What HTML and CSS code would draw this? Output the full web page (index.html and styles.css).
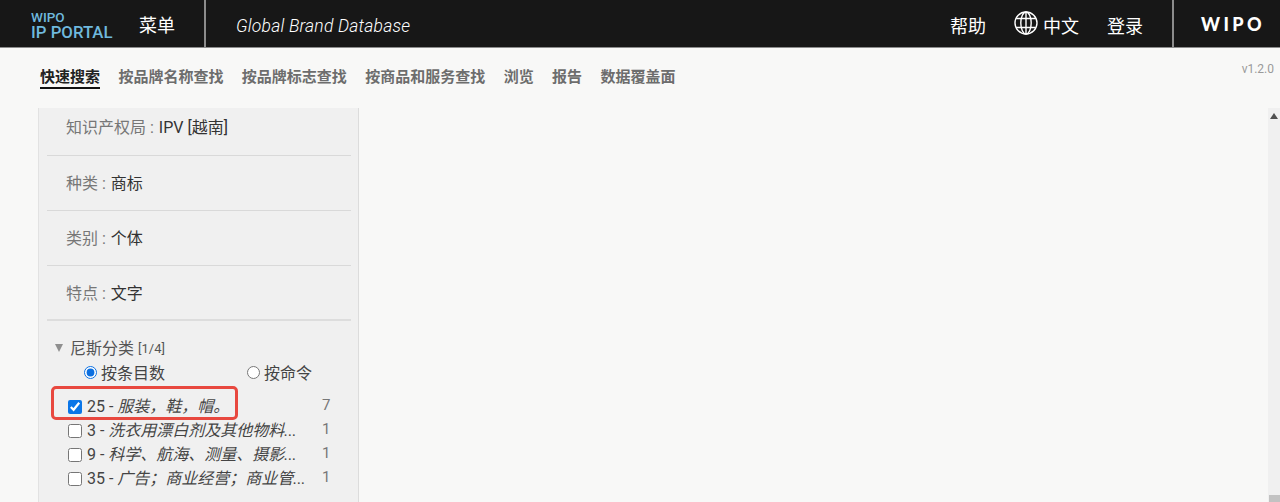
FILE: index.html
```html
<!DOCTYPE html>
<html lang="zh">
<head>
    <meta charset="UTF-8">
    <meta name="viewport" content="width=device-width, initial-scale=1.0">
    <title>Global Brand Database</title>
    <link rel="stylesheet" href="styles.css">
</head>
<body>
    <header class="topbar">
        <div class="logo">
            <span class="logo-small">WIPO</span>
            <span class="logo-big">IP PORTAL</span>
        </div>
        <div class="menu-link">菜单</div>
        <div class="app-name">Global Brand Database</div>
        <nav class="top-links">
            <span class="help-link">帮助</span>
            <span class="lang-link">
                <svg class="globe" width="24" height="24" viewBox="0 0 24 24" fill="none" stroke="#fff" stroke-width="1.4">
                    <circle cx="12" cy="12" r="11"/>
                    <ellipse cx="12" cy="12" rx="5.2" ry="11"/>
                    <path d="M12 1v22M2.2 7.5h19.6M2.2 16.5h19.6"/>
                </svg>
                中文
            </span>
            <span class="login-link">登录</span>
        </nav>
        <div class="wipo-mark">WIPO</div>
    </header>

    <div class="tabs-row">
        <ul class="tabs">
            <li class="tab active">快速搜索</li>
            <li class="tab">按品牌名称查找</li>
            <li class="tab">按品牌标志查找</li>
            <li class="tab">按商品和服务查找</li>
            <li class="tab">浏览</li>
            <li class="tab">报告</li>
            <li class="tab">数据覆盖面</li>
        </ul>
        <span class="version">v1.2.0</span>
    </div>

    <main class="content">
        <aside class="panel">
            <div class="facet first"><span class="facet-label">知识产权局 : </span>IPV [越南]</div>
            <div class="facet"><span class="facet-label">种类 : </span>商标</div>
            <div class="facet"><span class="facet-label">类别 : </span>个体</div>
            <div class="facet thick"><span class="facet-label">特点 : </span>文字</div>

            <div class="nice">
                <div class="nice-title">
                    <span class="arrow"></span>尼斯分类 <span class="count-note">[1/4]</span>
                </div>
                <div class="radios">
                    <label class="radio-item by-count"><input type="radio" name="order" checked>按条目数</label>
                    <label class="radio-item"><input type="radio" name="order">按命令</label>
                </div>
                <div class="nice-list">
                    <div class="highlight"></div>
                    <label class="nice-row">
                        <input type="checkbox" checked>
                        <span class="nice-text">25 - <em>服装，鞋，帽。</em></span>
                        <span class="nice-count">7</span>
                    </label>
                    <label class="nice-row">
                        <input type="checkbox">
                        <span class="nice-text">3 - <em>洗衣用漂白剂及其他物料...</em></span>
                        <span class="nice-count">1</span>
                    </label>
                    <label class="nice-row">
                        <input type="checkbox">
                        <span class="nice-text">9 - <em>科学、航海、测量、摄影...</em></span>
                        <span class="nice-count">1</span>
                    </label>
                    <label class="nice-row">
                        <input type="checkbox">
                        <span class="nice-text">35 - <em>广告；商业经营；商业管...</em></span>
                        <span class="nice-count">1</span>
                    </label>
                </div>
            </div>
        </aside>
        <div class="scrollbar">
            <span class="scroll-up"></span>
            <span class="scroll-thumb"></span>
        </div>
    </main>
</body>
</html>
```

FILE: styles.css
```css
* {
    box-sizing: border-box;
}
html, body {
    height: 100%;
}
body {
    margin: 0;
    background: #f8f8f7;
    color: #333;
    font-family: Roboto, "Noto Sans CJK SC", sans-serif;
    overflow: hidden;
}

/* top black bar */
.topbar {
    display: flex;
    align-items: center;
    height: 48px;
    background: #171717;
    border-bottom: 1px solid #8c8c8c;
    color: #fff;
}
.logo {
    display: flex;
    flex-direction: column;
    width: 139px;
    height: 47px;
    padding: 10px 0 0 31px;
    color: #6fb9de;
    font-weight: 500;
}
.logo-small {
    font-size: 13.5px;
    line-height: 14px;
}
.logo-big {
    font-size: 16.8px;
    line-height: 17px;
}
.menu-link {
    width: 67px;
    height: 47px;
    line-height: 52px;
    font-size: 18px;
    border-right: 2px solid #8c8c8c;
}
.app-name {
    flex: 1;
    padding: 4px 0 0 30px;
    font-size: 17.5px;
    font-style: italic;
    font-weight: 300;
    letter-spacing: 0.2px;
}
.top-links {
    display: flex;
    align-items: center;
    height: 47px;
    padding: 3px 29px 0 0;
    font-size: 18px;
    border-right: 2px solid #8c8c8c;
}
.help-link {
    margin-right: 29px;
}
.lang-link {
    display: flex;
    align-items: center;
    gap: 5px;
    margin-right: 28px;
}
.globe {
    margin-left: -1px;
    margin-top: -5px;
}
.wipo-mark {
    width: 106px;
    padding-left: 27px;
    font-family: Lato, sans-serif;
    font-weight: 900;
    font-size: 18px;
    letter-spacing: 3.4px;
}

/* tabs */
.tabs-row {
    display: flex;
    justify-content: space-between;
    height: 60px;
    padding: 0 6px 0 40px;
}
.tabs {
    display: flex;
    gap: 18.4px;
    list-style: none;
    margin: 0;
    padding: 19px 0 0;
}
.tab {
    height: 22px;
    font-size: 15px;
    line-height: 20px;
    font-weight: 700;
    color: #6d6d6d;
}
.tab.active {
    color: #222;
    border-bottom: 2px solid #111;
}
.version {
    padding-top: 14px;
    font-size: 12px;
    color: #9a9a9a;
}

/* main area */
.content {
    display: flex;
    justify-content: space-between;
    padding-left: 38px;
}
.scrollbar {
    display: flex;
    flex-direction: column;
    align-items: center;
    justify-content: space-between;
    width: 12px;
    height: 394px;
    padding-top: 5px;
    background: #f0f0f0;
}
.scroll-up {
    width: 0;
    height: 0;
    border-left: 4px solid transparent;
    border-right: 4px solid transparent;
    border-bottom: 6px solid #505050;
}
.scroll-thumb {
    width: 11px;
    height: 7px;
    margin-left: 1px;
    background: #c2c2c2;
}

/* left panel */
.panel {
    width: 321px;
    height: 394px;
    padding: 0 7px 0 8px;
    background: #f0f0f0;
    border-left: 1px solid #e2e2e2;
    border-right: 1px solid #dcdcdc;
    font-size: 16px;
}
.facet {
    height: 55px;
    padding: 17px 0 0 19px;
    line-height: 22px;
    border-bottom: 1px solid #d9d9d9;
    color: #333;
}
.facet.first {
    height: 48px;
    padding-top: 9px;
}
.facet.thick {
    border-bottom: 2px solid #dddddd;
}
.facet-label {
    padding-right: 1px;
    color: #777;
}

/* nice classification */
.nice {
    padding: 14px 0 0 8px;
}
.nice-title {
    display: flex;
    align-items: center;
    height: 24px;
    color: #555;
}
.arrow {
    width: 0;
    height: 0;
    margin: 2px 7px 0 0;
    border-left: 4.5px solid transparent;
    border-right: 4.5px solid transparent;
    border-top: 8px solid #8f8f8f;
}
.count-note {
    margin: 3px 0 0 4px;
    font-size: 13px;
}
.radios {
    display: flex;
    height: 26px;
    align-items: center;
    padding-left: 29px;
    color: #444;
}
.radio-item {
    display: flex;
    align-items: center;
}
.radio-item.by-count {
    width: 163px;
}
.radio-item input {
    width: 13px;
    height: 13px;
    margin: 0 4px 0 0;
    accent-color: #0b6fe0;
}
.nice-list {
    position: relative;
    margin-top: 8px;
}
.nice-row {
    display: flex;
    align-items: center;
    height: 24px;
    padding-left: 13px;
    font-size: 16px;
    color: #444;
}
.nice-row input {
    width: 14px;
    height: 14px;
    margin: 4px 5px 0 0;
    accent-color: #0b76e8;
}
.nice-text {
    width: 229px;
    white-space: nowrap;
}
.nice-text em {
    font-style: italic;
}
.nice-count {
    color: #777;
    padding-left: 6px;
    font-size: 15px;
}

/* red annotation drawn on the screenshot */
.highlight {
    position: absolute;
    left: -4px;
    top: -7px;
    width: 187px;
    height: 34px;
    border: 3px solid #e8483f;
    border-radius: 5px;
    pointer-events: none;
}
```
